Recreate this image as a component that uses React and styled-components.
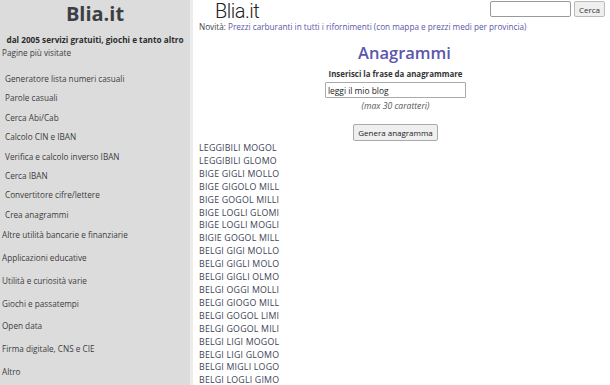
import React from "react";
import styled, { createGlobalStyle } from "styled-components";

const GlobalStyle = createGlobalStyle`
  body {
    margin: 0;
    background: #ffffff;
    font-family: "Open Sans", "Noto Sans", sans-serif;
  }
`;

const topPages = [
  "Generatore lista numeri casuali",
  "Parole casuali",
  "Cerca Abi/Cab",
  "Calcolo CIN e IBAN",
  "Verifica e calcolo inverso IBAN",
  "Cerca IBAN",
  "Convertitore cifre/lettere",
  "Crea anagrammi",
];

const sections = [
  "Altre utilità bancarie e finanziarie",
  "Applicazioni educative",
  "Utilità e curiosità varie",
  "Giochi e passatempi",
  "Open data",
  "Firma digitale, CNS e CIE",
  "Altro",
];

const results = [
  "LEGGIBILI MOGOL",
  "LEGGIBILI GLOMO",
  "BIGE GIGLI MOLLO",
  "BIGE GIGOLO MILL",
  "BIGE GOGOL MILLI",
  "BIGE LOGLI GLOMI",
  "BIGE LOGLI MOGLI",
  "BIGIE GOGOL MILL",
  "BELGI GIGI MOLLO",
  "BELGI GIGLI MOLO",
  "BELGI GIGLI OLMO",
  "BELGI OGGI MOLLI",
  "BELGI GIOGO MILL",
  "BELGI GOGOL LIMI",
  "BELGI GOGOL MILI",
  "BELGI LIGI MOGOL",
  "BELGI LIGI GLOMO",
  "BELGI MIGLI LOGO",
  "BELGI LOGLI GIMO",
];

export default function App() {
  return (
    <>
      <GlobalStyle />
      <Page>
        <Sidebar>
          <SideLogo>Blia.it</SideLogo>
          <Tagline>dal 2005 servizi gratuiti, giochi e tanto altro</Tagline>
          <SectionTitle>Pagine più visitate</SectionTitle>
          <SubList>
            {topPages.map((p) => (
              <SubItem key={p}>{p}</SubItem>
            ))}
          </SubList>
          {sections.map((s) => (
            <SectionItem key={s}>{s}</SectionItem>
          ))}
        </Sidebar>
        <Main>
          <Header>
            <MainLogo>Blia.it</MainLogo>
            <Search>
              <SearchInput type="text" />
              <SmallButton>Cerca</SmallButton>
            </Search>
          </Header>
          <News>
            Novità: <NewsLink>Prezzi carburanti in tutti i rifornimenti (con mappa e prezzi medi per provincia)</NewsLink>
          </News>
          <Heading>Anagrammi</Heading>
          <Form>
            <Label>Inserisci la frase da anagrammare</Label>
            <PhraseInput type="text" defaultValue="leggi il mio blog" />
            <Hint>(max 30 caratteri)</Hint>
            <GenButton>Genera anagramma</GenButton>
          </Form>
          <Results>
            {results.map((r, i) => (
              <Result key={i}>{r}</Result>
            ))}
          </Results>
        </Main>
      </Page>
    </>
  );
}

const Page = styled.div`
  display: flex;
  height: 385px;
  overflow: hidden;
`;

const Sidebar = styled.div`
  width: 190px;
  flex-shrink: 0;
  background: #dcdcdc;
  border-right: 3px solid #ececec;
  color: #3c3c3c;
  display: flex;
  flex-direction: column;
`;

const SideLogo = styled.div`
  font-family: "Open Sans", sans-serif;
  font-weight: 700;
  font-size: 20px;
  line-height: 28px;
  text-align: center;
  color: #3d3f45;
`;

const Tagline = styled.div`
  font-weight: 700;
  font-size: 8.2px;
  line-height: 12px;
  text-align: center;
  margin-top: 6px;
  color: #2d2d2d;
`;

const SectionTitle = styled.div`
  font-size: 8.2px;
  line-height: 12px;
  padding-left: 2px;
  margin-top: 1px;
`;

const SubList = styled.div`
  display: flex;
  flex-direction: column;
  padding-left: 5px;
  margin-top: 10px;
`;

const SubItem = styled.div`
  font-size: 8.2px;
  line-height: 19.4px;
`;

const SectionItem = styled.div`
  font-size: 8.2px;
  line-height: 22.8px;
  padding-left: 2px;
  &:first-of-type {
    margin-top: 2px;
  }
`;

const Main = styled.div`
  flex: 1;
  padding-left: 6px;
  display: flex;
  flex-direction: column;
  color: #333;
`;

const Header = styled.div`
  display: flex;
  justify-content: space-between;
  align-items: flex-start;
  padding-right: 5px;
`;

const MainLogo = styled.div`
  font-family: "Roboto", sans-serif;
  font-weight: 300;
  font-size: 20px;
  line-height: 22px;
  letter-spacing: -0.5px;
  margin-left: 16px;
  color: #222;
`;

const Search = styled.div`
  display: flex;
  gap: 3px;
  padding-top: 1px;
`;

const SearchInput = styled.input`
  box-sizing: border-box;
  width: 81px;
  height: 16px;
  border: 1px solid #999;
  border-radius: 2px;
  padding: 0 2px;
`;

const SmallButton = styled.button`
  font-family: "Open Sans", sans-serif;
  font-size: 8px;
  height: 16px;
  padding: 0 4px;
  background: #efefef;
  border: 1px solid #bbb;
  border-radius: 2px;
  color: #333;
`;

const News = styled.div`
  font-size: 8.2px;
  color: #444;
  line-height: 10px;
`;

const NewsLink = styled.span`
  color: #5a57a8;
`;

const Heading = styled.h1`
  margin: 10px 0 0;
  font-size: 16.5px;
  font-weight: 600;
  text-align: center;
  color: #5b56ad;
  line-height: 22px;
`;

const Form = styled.div`
  display: flex;
  flex-direction: column;
  align-items: center;
  padding-right: 18px;
`;

const Label = styled.div`
  font-weight: 700;
  font-size: 7.9px;
  margin-top: 4px;
  line-height: 12px;
`;

const PhraseInput = styled.input`
  box-sizing: border-box;
  width: 141px;
  height: 16px;
  margin-top: 2px;
  border: 1px solid #aaa;
  border-radius: 1px;
  padding: 0 2px;
  font-family: "Open Sans", sans-serif;
  font-size: 8.4px;
  color: #222;
`;

const Hint = styled.div`
  font-style: italic;
  font-size: 8.6px;
  line-height: 12px;
  margin-top: 2px;
  color: #555;
`;

const GenButton = styled.button`
  margin-top: 12px;
  font-family: "Open Sans", sans-serif;
  font-size: 8px;
  height: 17px;
  padding: 0 4px;
  background: #efefef;
  border: 1px solid #aaa;
  border-radius: 2px;
  color: #222;
`;

const Results = styled.div`
  display: flex;
  flex-direction: column;
  margin-top: 1px;
`;

const Result = styled.div`
  font-size: 8.8px;
  line-height: 12.9px;
  letter-spacing: 0.2px;
  color: #3c4456;
`;
